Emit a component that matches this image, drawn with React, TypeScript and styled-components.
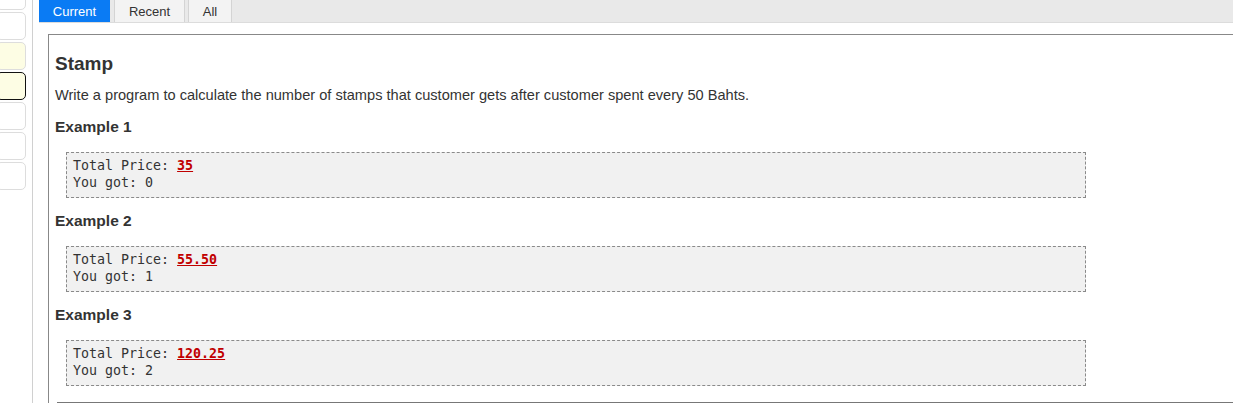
import styled, { createGlobalStyle } from "styled-components";

const GlobalStyle = createGlobalStyle`
  html, body {
    margin: 0;
    padding: 0;
    background: #fff;
    overflow: hidden;
  }
  body {
    font-family: "Liberation Sans", Arial, sans-serif;
    color: #333;
  }
`

const Page = styled.div`
  display: flex;
  height: 403px;
  overflow: hidden;
`

const Sidebar = styled.div`
  width: 32px;
  flex-shrink: 0;
  border-right: 1px solid #d0d0d0;
  display: flex;
  flex-direction: column;
  gap: 2px;
  overflow: hidden;
`

const SideItem = styled.div<{ $tone?: "plain" | "marked" | "active" }>`
  width: 30px;
  height: 28px;
  margin-left: -4px;
  flex-shrink: 0;
  box-sizing: border-box;
  border-radius: 5px;
  border: 1px solid ${p => p.$tone === "active" ? "#111" : "#ddd"};
  background: ${p => p.$tone === "plain" || !p.$tone ? "#fff" : "#fdfde4"};

  &:first-child {
    margin-top: -18px;
  }
`

const Main = styled.div`
  flex: 1;
  margin-left: 6px;
  display: flex;
  flex-direction: column;
  min-width: 0;
`

const TabBar = styled.div`
  height: 22px;
  background: #e9e9e9;
  border-bottom: 1px solid #dcdcdc;
  display: flex;
  gap: 3px;
`

const Tab = styled.div<{ $active?: boolean; $w: number }>`
  width: ${p => p.$w}px;
  height: 22px;
  box-sizing: border-box;
  display: flex;
  align-items: center;
  justify-content: center;
  font-size: 13px;
  color: ${p => p.$active ? "#fff" : "#333"};
  background: ${p => p.$active ? "#0a7bf4" : "#f3f3f3"};
  border-left: 1px solid ${p => p.$active ? "#0a7bf4" : "#d4d4d4"};
  border-right: 1px solid ${p => p.$active ? "#0a7bf4" : "#d4d4d4"};

  &:first-child {
    margin-right: 1px;
  }
`

const Panel = styled.div`
  margin-top: 11px;
  margin-left: 9px;
  margin-right: -4px;
  flex: 1;
  border-top: 1px solid #888;
  border-left: 1px solid #888;
  padding-left: 6px;
`

const Title = styled.h2`
  margin: 17px 0 0;
  font-size: 19px;
  font-weight: bold;
  line-height: 23px;
  color: #333;
`

const Description = styled.p`
  margin: 12px 0 0;
  font-size: 14.6px;
  line-height: 16px;
`

const ExampleTitle = styled.h3`
  margin: 14px 0 0;
  font-size: 15.5px;
  font-weight: bold;
  line-height: 18px;
  color: #333;
`

const Example = styled.div`
  &:first-of-type ${ExampleTitle} {
    margin-top: 15px;
  }
`

const Sample = styled.pre`
  margin: 16px 0 0 11px;
  width: 1020px;
  box-sizing: border-box;
  padding: 4px 6px 6px;
  background: #f1f1f1;
  border: 1px dashed #8a8a8a;
  font-family: "DejaVu Sans Mono", "Liberation Mono", monospace;
  font-size: 13.3px;
  line-height: 17px;
  color: #333;
`

const Input = styled.span`
  color: #c00000;
  font-weight: bold;
  text-decoration: underline;
`

const Divider = styled.div`
  margin: 16px 0 0 2px;
  border-top: 1px solid #777;
`

const examples = [
  { price: "35", got: 0 },
  { price: "55.50", got: 1 },
  { price: "120.25", got: 2 },
]

const sideItems: Array<"plain" | "marked" | "active"> = [
  "plain", "plain", "marked", "active", "plain", "plain", "plain",
]

const App = () => {
  return (
    <>
      <GlobalStyle />
      <Page>
        <Sidebar>
          {sideItems.map((tone, i) => <SideItem key={i} $tone={tone} />)}
        </Sidebar>
        <Main>
          <TabBar>
            <Tab $active $w={71}>Current</Tab>
            <Tab $w={71}>Recent</Tab>
            <Tab $w={44}>All</Tab>
          </TabBar>
          <Panel>
            <Title>Stamp</Title>
            <Description>
              Write a program to calculate the number of stamps that customer gets after customer spent every 50 Bahts.
            </Description>
            {examples.map((ex, i) => (
              <Example key={i}>
                <ExampleTitle>Example {i + 1}</ExampleTitle>
                <Sample>
                  Total Price: <Input>{ex.price}</Input>{"\n"}You got: {ex.got}
                </Sample>
              </Example>
            ))}
            <Divider />
          </Panel>
        </Main>
      </Page>
    </>
  )
}

export default App;
